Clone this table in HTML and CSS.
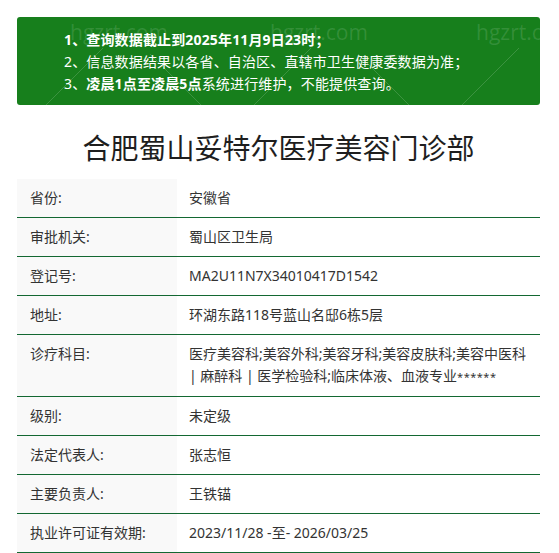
FILE: index.html
```html
<!DOCTYPE html>
<html lang="zh-CN">
<head>
<meta charset="utf-8">
<title>合肥蜀山妥特尔医疗美容门诊部</title>
<link rel="stylesheet" href="styles.css">
</head>
<body>
<div class="page">
  <div class="notice">
    <svg class="wm-lines" width="523" height="88" viewBox="0 0 523 88" aria-hidden="true">
      <g stroke="rgba(255,255,255,0.16)" stroke-width="1" fill="none">
        <line x1="29" y1="88" x2="86" y2="31"/>
        <line x1="237" y1="88" x2="294" y2="31"/>
        <line x1="445" y1="88" x2="502" y2="31"/>
        <line x1="133" y1="37" x2="184" y2="88"/>
        <line x1="341" y1="37" x2="392" y2="88"/>
      </g>
    </svg>
    <span class="wm wm1">hgzrt.com</span>
    <span class="wm wm2">hgzrt.com</span>
    <span class="wm wm3">hgzrt.com</span>
    <ol class="notice-list">
      <li class="b">1、查询数据截止到2025年11月9日23时；</li>
      <li>2、信息数据结果以各省、自治区、直辖市卫生健康委数据为准；</li>
      <li>3、<b>凌晨1点至凌晨5点</b>系统进行维护，不能提供查询。</li>
    </ol>
  </div>

  <h1 class="title">合肥蜀山妥特尔医疗美容门诊部</h1>

  <div class="info">
    <div class="row"><div class="label">省份:</div><div class="value">安徽省</div></div>
    <div class="row"><div class="label">审批机关:</div><div class="value">蜀山区卫生局</div></div>
    <div class="row"><div class="label">登记号:</div><div class="value">MA2U11N7X34010417D1542</div></div>
    <div class="row"><div class="label">地址:</div><div class="value">环湖东路118号蓝山名邸6栋5层</div></div>
    <div class="row"><div class="label">诊疗科目:</div><div class="value">医疗美容科;美容外科;美容牙科;美容皮肤科;美容中医科 | 麻醉科 | 医学检验科;临床体液、血液专业<span class="stars">******</span></div></div>
    <div class="row"><div class="label">级别:</div><div class="value">未定级</div></div>
    <div class="row"><div class="label">法定代表人:</div><div class="value">张志恒</div></div>
    <div class="row"><div class="label">主要负责人:</div><div class="value">王铁锚</div></div>
    <div class="row"><div class="label">执业许可证有效期:</div><div class="value">2023/11/28 -至- 2026/03/25</div></div>
  </div>
</div>
</body>
</html>
```

FILE: styles.css
```css
* { box-sizing: border-box; }

html, body {
  margin: 0;
  padding: 0;
  background: #ffffff;
}

body {
  font-family: "Noto Sans", "Noto Sans CJK SC", sans-serif;
  color: #333333;
  font-size: 14px;
}

.page {
  width: 523px;
  margin: 17px 0 0 17px;
}

.notice {
  position: relative;
  overflow: hidden;
  background: #177f1c;
  border-radius: 3px;
  height: 88px;
  padding: 12px 0 0 47px;
}

.wm-lines {
  position: absolute;
  left: 0;
  top: 0;
}

.wm {
  position: absolute;
  top: 1px;
  font-family: "Open Sans", "Noto Sans", sans-serif;
  font-size: 21px;
  color: rgba(255, 255, 255, 0.13);
  white-space: nowrap;
  line-height: 28px;
}
.wm1 { left: 53px; }
.wm2 { left: 253px; }
.wm3 { left: 459px; }

.notice-list {
  position: relative;
  list-style: none;
  margin: 0;
  padding: 0;
  color: #ffffff;
  font-size: 14px;
  line-height: 22px;
  letter-spacing: 0.15px;
}

.notice-list li { white-space: nowrap; }
.notice-list .b,
.notice-list b { font-weight: 700; }

.title {
  margin: 23px 0 11px;
  font-size: 28px;
  line-height: 40px;
  font-weight: 400;
  color: #1e1e1e;
  text-align: center;
}

.info {
  display: flex;
  flex-direction: column;
}

.row {
  display: grid;
  grid-template-columns: 160px 1fr;
  border-bottom: 1px solid #136832;
}

.label {
  background: #f9f9f9;
  padding: 8px 10px 8px 13px;
  line-height: 22px;
  color: #333333;
}

.value {
  padding: 8px 12px 8px 12px;
  line-height: 22px;
  color: #333333;
}

.stars {
  font-size: 11px;
  letter-spacing: 0.5px;
}
```
